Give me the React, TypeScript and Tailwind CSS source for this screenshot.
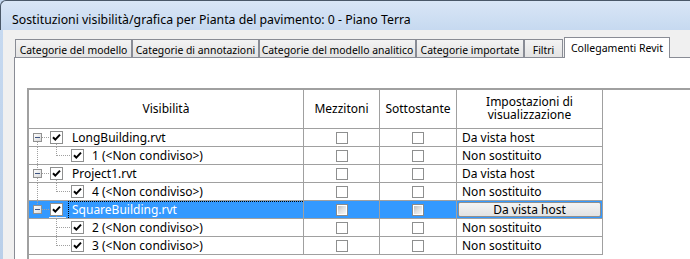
import React from "react";

type Row = {
  kind: "parent" | "child";
  label: string;
  setting: string;
  rootUp?: boolean;
  rootDown?: boolean;
  rootThrough?: boolean;
  last?: boolean;
  selected?: boolean;
};

const rows: Row[] = [
  { kind: "parent", label: "LongBuilding.rvt", setting: "Da vista host", rootUp: false, rootDown: true },
  { kind: "child", label: "1 (<Non condiviso>)", setting: "Non sostituito", rootThrough: true, last: true },
  { kind: "parent", label: "Project1.rvt", setting: "Da vista host", rootUp: true, rootDown: true },
  { kind: "child", label: "4 (<Non condiviso>)", setting: "Non sostituito", rootThrough: true, last: true },
  { kind: "parent", label: "SquareBuilding.rvt", setting: "Da vista host", rootUp: true, rootDown: false, selected: true },
  { kind: "child", label: "2 (<Non condiviso>)", setting: "Non sostituito", rootThrough: false, last: false },
  { kind: "child", label: "3 (<Non condiviso>)", setting: "Non sostituito", rootThrough: false, last: true },
];

function CheckMark() {
  return (
    <svg width="11" height="11" viewBox="0 0 11 11">
      <polyline points="2,5.2 4.3,7.6 9,2.6" fill="none" stroke="#000" strokeWidth="2" />
    </svg>
  );
}

function TreeBox() {
  return (
    <div className="w-[13px] h-[13px] shrink-0 border border-[#8e8f8f] bg-white flex items-center justify-center">
      <CheckMark />
    </div>
  );
}

function GridBox({ disabled }: { disabled?: boolean }) {
  if (disabled) {
    return (
      <div className="w-[12px] h-[12px] border border-[#8a8a8a] bg-white p-px">
        <div className="w-full h-full bg-gradient-to-br from-[#bdbdbd] via-[#e2e2e2] to-[#f7f7f7]" />
      </div>
    );
  }
  return <div className="w-[12px] h-[12px] border border-[#8e8f8f] bg-white" />;
}

const DOT = { stroke: "#a0a0a0", strokeDasharray: "1 1", strokeWidth: 1 };

function Connectors({ r }: { r: Row }) {
  return (
    <svg width="60" height="18" className="absolute left-0 top-0 pointer-events-none" viewBox="0 0 60 18">
      <defs>
        <linearGradient id="expg" x1="0" y1="0" x2="1" y2="1">
          <stop offset="0" stopColor="#ffffff" />
          <stop offset="1" stopColor="#d8d8d8" />
        </linearGradient>
      </defs>
      {r.kind === "parent" && (
        <>
          {r.rootUp && <line x1="8.5" y1="0" x2="8.5" y2="4" {...DOT} />}
          {r.rootDown && <line x1="8.5" y1="13" x2="8.5" y2="18" {...DOT} />}
          <line x1="13" y1="8.5" x2="21" y2="8.5" {...DOT} />
          <line x1="27.5" y1="15" x2="27.5" y2="18" {...DOT} />
          <rect x="4.5" y="4.5" width="8" height="8" fill="url(#expg)" stroke="#919191" />
          <line x1="6" y1="8.5" x2="11" y2="8.5" stroke="#3e5482" strokeWidth="1" />
        </>
      )}
      {r.kind === "child" && (
        <>
          {r.rootThrough && <line x1="8.5" y1="0" x2="8.5" y2="18" {...DOT} />}
          <line x1="27.5" y1="0" x2="27.5" y2={r.last ? 9 : 18} {...DOT} />
          <line x1="28" y1="8.5" x2="42" y2="8.5" {...DOT} />
        </>
      )}
    </svg>
  );
}

function TableRow({ r }: { r: Row }) {
  const sel = !!r.selected;
  const bg = sel ? "bg-[#3399ff]" : "bg-white";
  return (
    <div className="flex h-[18px]">
      <div className={`relative w-[275px] h-[18px] border-r border-b border-[#a0a0a0] ${bg} flex items-center`}>
        <Connectors r={r} />
        {r.kind === "parent" ? (
          <div className="flex items-center pl-[21px]">
            <TreeBox />
            <span className={`ml-[9px] whitespace-nowrap ${sel ? "text-white" : "text-black"}`}>{r.label}</span>
          </div>
        ) : (
          <div className="flex items-center pl-[42px]">
            <TreeBox />
            <span className="ml-[8px] whitespace-nowrap text-black">{r.label}</span>
          </div>
        )}
        {sel && (
          <>
            <div className="absolute left-[39px] top-0 w-[235px] h-[17px] border-t border-l border-dotted border-black" />
            <div className="absolute left-[20px] top-[16px] w-[17px] h-px bg-[#e8eef7]" />
          </>
        )}
      </div>
      <div className={`w-[76px] h-[18px] border-r border-b border-[#a0a0a0] ${bg} flex items-center justify-center`}>
        <GridBox disabled={sel} />
      </div>
      <div className={`w-[77px] h-[18px] border-r border-b border-[#a0a0a0] ${bg} flex items-center justify-center`}>
        <GridBox disabled={sel} />
      </div>
      <div className={`w-[146px] h-[18px] border-r border-b border-[#a0a0a0] ${bg} flex items-center`}>
        {sel ? (
          <div className="ml-px w-[143px] h-[15px] border border-[#8f8f8f] rounded-[2px] bg-gradient-to-b from-[#f4f4f4] to-[#e2e2e2] flex items-center justify-center leading-none text-black">
            Da vista host
          </div>
        ) : (
          <span className="pl-[5px] whitespace-nowrap text-black">{r.setting}</span>
        )}
      </div>
    </div>
  );
}

function Tab({ label, w, active }: { label: string; w: string; active?: boolean }) {
  if (active) {
    return (
      <div className={`${w} h-[21px] -mb-px relative z-10 bg-white border border-b-0 border-[#898c95] flex items-start justify-center pt-[3px] ml-px`}>
        <span className="whitespace-nowrap leading-[14px] text-[10.5px]">{label}</span>
      </div>
    );
  }
  return (
    <div className={`${w} h-[18px] bg-gradient-to-b from-[#f3f3f3] to-[#e3e3e3] border border-b-0 border-[#898c95] flex items-center justify-center`}>
      <span className="whitespace-nowrap leading-[14px] pt-[2px] text-[10.4px]">{label}</span>
    </div>
  );
}

export default function App() {
  return (
    <div className="w-[690px] h-[259px] overflow-hidden flex flex-col bg-[#c3d7ef] font-['Noto_Sans',sans-serif] text-[12px] text-black">
      <div className="h-[30px] shrink-0 bg-gradient-to-b from-[#d9e6f6] to-[#c6d9f0] pl-[11px] pt-[11px] rounded-tl-[6px] border-t border-l border-[#4a5868]">
        <div className="leading-[16px] whitespace-nowrap text-[12.3px]">
          Sostituzioni visibilità/grafica per Pianta del pavimento: 0 - Piano Terra
        </div>
      </div>
      <div className="flex-1 flex min-h-0">
        <div className="w-[3px] shrink-0 bg-gradient-to-b from-[#c6d9f0] to-[#b9cfe9]" />
        <div className="flex-1 bg-[#f0f0f0] pl-[11px] flex flex-col min-w-0">
          <div className="h-[27px] shrink-0 flex items-end pl-px">
            <Tab label="Categorie del modello" w="w-[117px]" />
            <Tab label="Categorie di annotazioni" w="w-[127px]" />
            <Tab label="Categorie del modello analitico" w="w-[157px]" />
            <Tab label="Categorie importate" w="w-[108px]" />
            <Tab label="Filtri" w="w-[39px]" />
            <Tab label="Collegamenti Revit" w="w-[106px]" active />
          </div>
          <div className="flex-1 bg-white border-t border-l border-[#898c95] pt-[30px] pl-[12px] flex flex-col min-h-0">
            <div className="flex-1 border-t-2 border-l-2 border-[#a0a0a0] bg-white min-w-0">
              <div className="flex h-[39px]">
                <div className="w-[275px] h-full border-r border-b border-[#a0a0a0] flex items-center justify-center">Visibilità</div>
                <div className="w-[76px] h-full border-r border-b border-[#a0a0a0] flex items-center justify-center">Mezzitoni</div>
                <div className="w-[77px] h-full border-r border-b border-[#a0a0a0] flex items-center justify-center">Sottostante</div>
                <div className="w-[146px] h-full border-r border-b border-[#a0a0a0] flex items-center justify-center">
                  <p className="leading-[13px] text-center pb-[2px]">
                    Impostazioni di
                    <br />
                    visualizzazione
                  </p>
                </div>
              </div>
              {rows.map((r, i) => (
                <TableRow key={i} r={r} />
              ))}
            </div>
          </div>
        </div>
      </div>
    </div>
  );
}
